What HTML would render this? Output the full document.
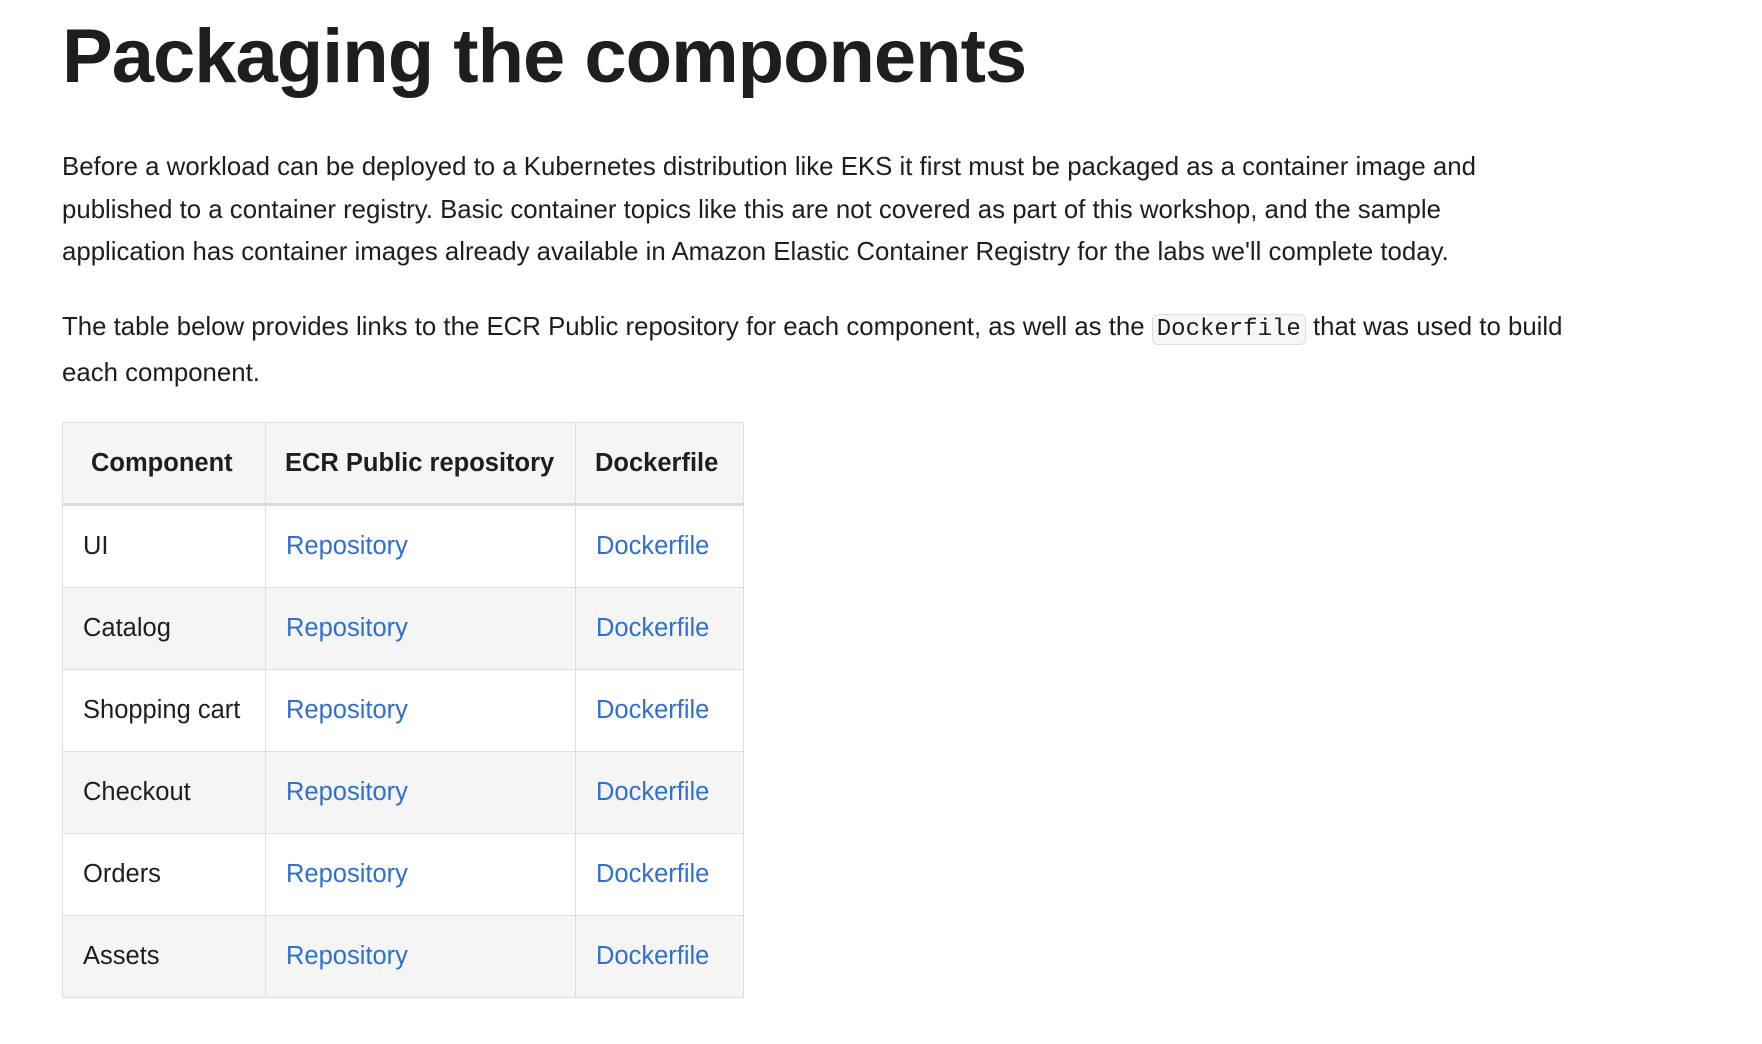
<!DOCTYPE html>
<html><head><meta charset="utf-8"><style>
body{margin:0;background:#fff;color:#1c1e21;font-family:"Liberation Sans",sans-serif;width:1762px;height:1044px;overflow:hidden}
.w{position:absolute;left:62px;top:0;width:1650px}
h1{margin:0;position:absolute;top:13px;font-size:76px;font-weight:bold;letter-spacing:-1px;white-space:nowrap}
p{margin:0;position:absolute;font-size:25.8px;line-height:42.5px;white-space:nowrap}
code{font-family:"Liberation Mono",monospace;font-size:24px;background:#f6f7f8;border:1px solid #dadde1;border-radius:6px;padding:1px 4px}
table{position:absolute;top:422px;border-collapse:collapse;font-size:25.5px;table-layout:fixed;width:681px}
td,th{border:1px solid #dfdfdf;padding:0 20px;height:81px;text-align:left;white-space:nowrap;overflow:hidden}
th{height:80px;background:#f5f5f5;font-weight:bold;border-bottom:3px solid #dadada;padding:0 19px}
th:first-child{padding:0 28px}
tr:nth-child(odd) td{background:#f5f5f5}
a{color:#2e6fd1;text-decoration:none}
</style></head><body><div class="w">
<h1>Packaging the components</h1>
<p style="top:146px">Before a workload can be deployed to a Kubernetes distribution like EKS it first must be packaged as a container image and<br>published to a container registry. Basic container topics like this are not covered as part of this workshop, and the sample<br>application has container images already available in Amazon Elastic Container Registry for the labs we'll complete today.</p>
<p style="top:306px">The table below provides links to the ECR Public repository for each component, as well as the <code>Dockerfile</code> that was used to build<br>each component.</p>
<table>
<colgroup><col style="width:203px"><col style="width:310px"><col style="width:168px"></colgroup>
<tr><th>Component</th><th>ECR Public repository</th><th>Dockerfile</th></tr>
<tr><td>UI</td><td><a>Repository</a></td><td><a>Dockerfile</a></td></tr>
<tr><td>Catalog</td><td><a>Repository</a></td><td><a>Dockerfile</a></td></tr>
<tr><td>Shopping cart</td><td><a>Repository</a></td><td><a>Dockerfile</a></td></tr>
<tr><td>Checkout</td><td><a>Repository</a></td><td><a>Dockerfile</a></td></tr>
<tr><td>Orders</td><td><a>Repository</a></td><td><a>Dockerfile</a></td></tr>
<tr><td>Assets</td><td><a>Repository</a></td><td><a>Dockerfile</a></td></tr>
</table>
</div></body></html>
